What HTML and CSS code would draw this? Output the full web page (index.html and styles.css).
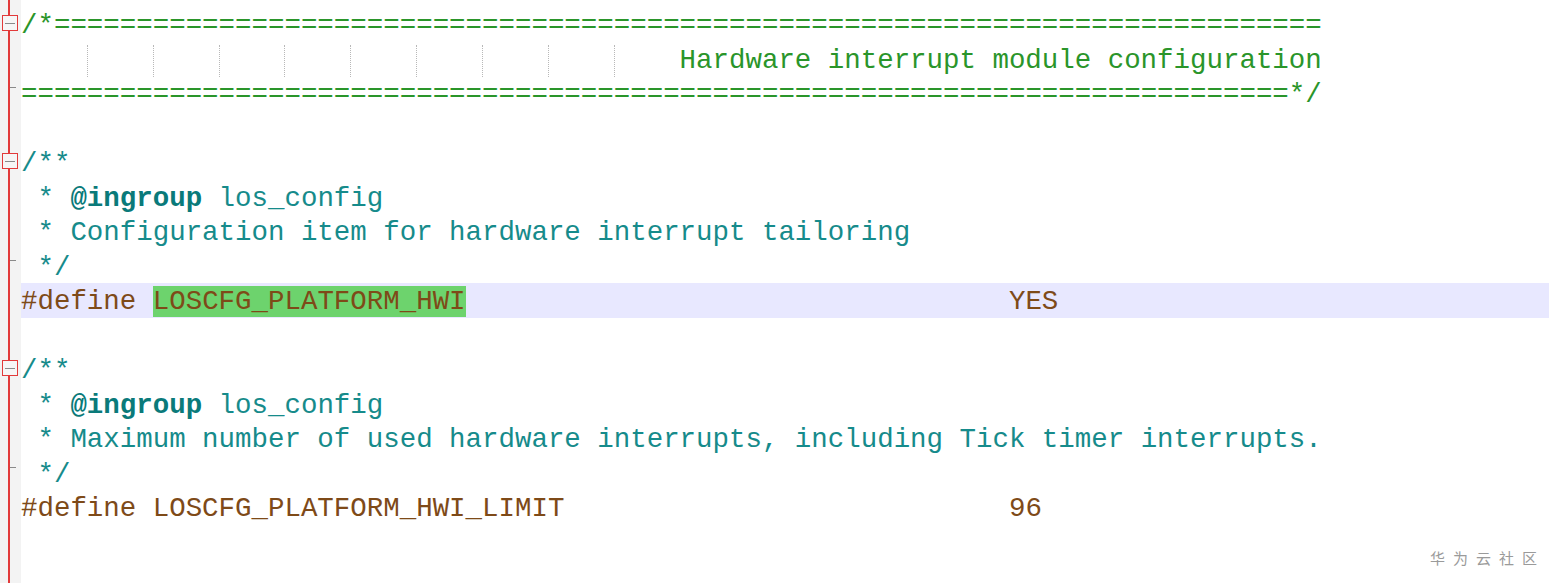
FILE: index.html
```html
<!DOCTYPE html>
<html>
<head>
<meta charset="utf-8">
<link rel="stylesheet" href="styles.css">
</head>
<body>
<div class="editor">
  <div class="row"><div class="gut fold"></div><div class="code cmt">/*=============================================================================</div></div>
  <div class="row"><div class="gut"></div><div class="code cmt"><span class="tab"></span><span class="tab g"></span><span class="tab g"></span><span class="tab g"></span><span class="tab g"></span><span class="tab g"></span><span class="tab g"></span><span class="tab g"></span><span class="tab g"></span><span class="tab g"></span>Hardware interrupt module configuration</div></div>
  <div class="row"><div class="gut end"></div><div class="code cmt">=============================================================================*/</div></div>
  <div class="row"><div class="gut"></div><div class="code"></div></div>
  <div class="row"><div class="gut fold"></div><div class="code doc">/**</div></div>
  <div class="row"><div class="gut"></div><div class="code doc"> * <b class="kw">@ingroup</b> los_config</div></div>
  <div class="row"><div class="gut"></div><div class="code doc"> * Configuration item for hardware interrupt tailoring</div></div>
  <div class="row"><div class="gut end"></div><div class="code doc"> */</div></div>
  <div class="row"><div class="gut"></div><div class="code pre current">#define <span class="match">LOSCFG_PLATFORM_HWI</span>                                 YES</div></div>
  <div class="row"><div class="gut"></div><div class="code"></div></div>
  <div class="row"><div class="gut fold"></div><div class="code doc">/**</div></div>
  <div class="row"><div class="gut"></div><div class="code doc"> * <b class="kw">@ingroup</b> los_config</div></div>
  <div class="row"><div class="gut"></div><div class="code doc"> * Maximum number of used hardware interrupts, including Tick timer interrupts.</div></div>
  <div class="row"><div class="gut end"></div><div class="code doc"> */</div></div>
  <div class="row"><div class="gut"></div><div class="code pre">#define LOSCFG_PLATFORM_HWI_LIMIT                           96</div></div>
  <div class="row"><div class="gut"></div><div class="code"></div></div>
  <div class="row"><div class="gut"></div><div class="code"></div></div>
</div>
<div class="watermark">华为云社区</div>
</body>
</html>
```
FILE: styles.css
```css
html, body {
  margin: 0;
  padding: 0;
  height: 100%;
  overflow: hidden;
}
body {
  background: linear-gradient(to right, #f3f3f3 0 8px, #e23a3a 8px 10px, #f3f3f3 10px 21px, #ffffff 21px);
  position: relative;
  width: 1549px;
  height: 583px;
}
.editor {
  padding-top: 7px;
  display: flex;
  flex-direction: column;
}
.row {
  display: flex;
  height: 34.5px;
}
.gut {
  width: 21px;
  flex: none;
  position: relative;
}
.gut.fold::after {
  content: "";
  position: absolute;
  left: 2px;
  top: 8px;
  width: 14px;
  height: 14px;
  border: 1px solid #e23a3a;
  background: linear-gradient(#8a8a8a, #8a8a8a) center / 10px 1px no-repeat, #f6f6f6;
}
.gut.end::after {
  content: "";
  position: absolute;
  left: 10px;
  top: 11px;
  width: 6px;
  height: 1px;
  background: #8a8a8a;
}
.code {
  flex: 1;
  box-sizing: border-box;
  padding-top: 2px;
  font-family: "Liberation Mono", "Courier New", monospace;
  font-size: 27.45px;
  line-height: 34.5px;
  white-space: pre;
  color: #000;
}
.cmt { color: #2a952a; }
.doc { color: #168b8b; }
.kw { color: #0a7a7a; font-weight: bold; }
.pre { color: #7e4a18; }
.current { background: #e8e8ff; }
.match { background: #6dd36d; }
.tab {
  display: inline-block;
  width: 4ch;
  height: 32px;
  vertical-align: top;
  box-sizing: border-box;
}
.tab.g {
  border-left: 1px dotted #b8b8b8;
  margin-top: 1px;
  height: 32px;
}
.watermark {
  position: absolute;
  right: 4px;
  top: 547px;
  font-family: "Noto Sans CJK SC", sans-serif;
  font-size: 15px;
  letter-spacing: 8px;
  color: #9a9a9a;
}
```
